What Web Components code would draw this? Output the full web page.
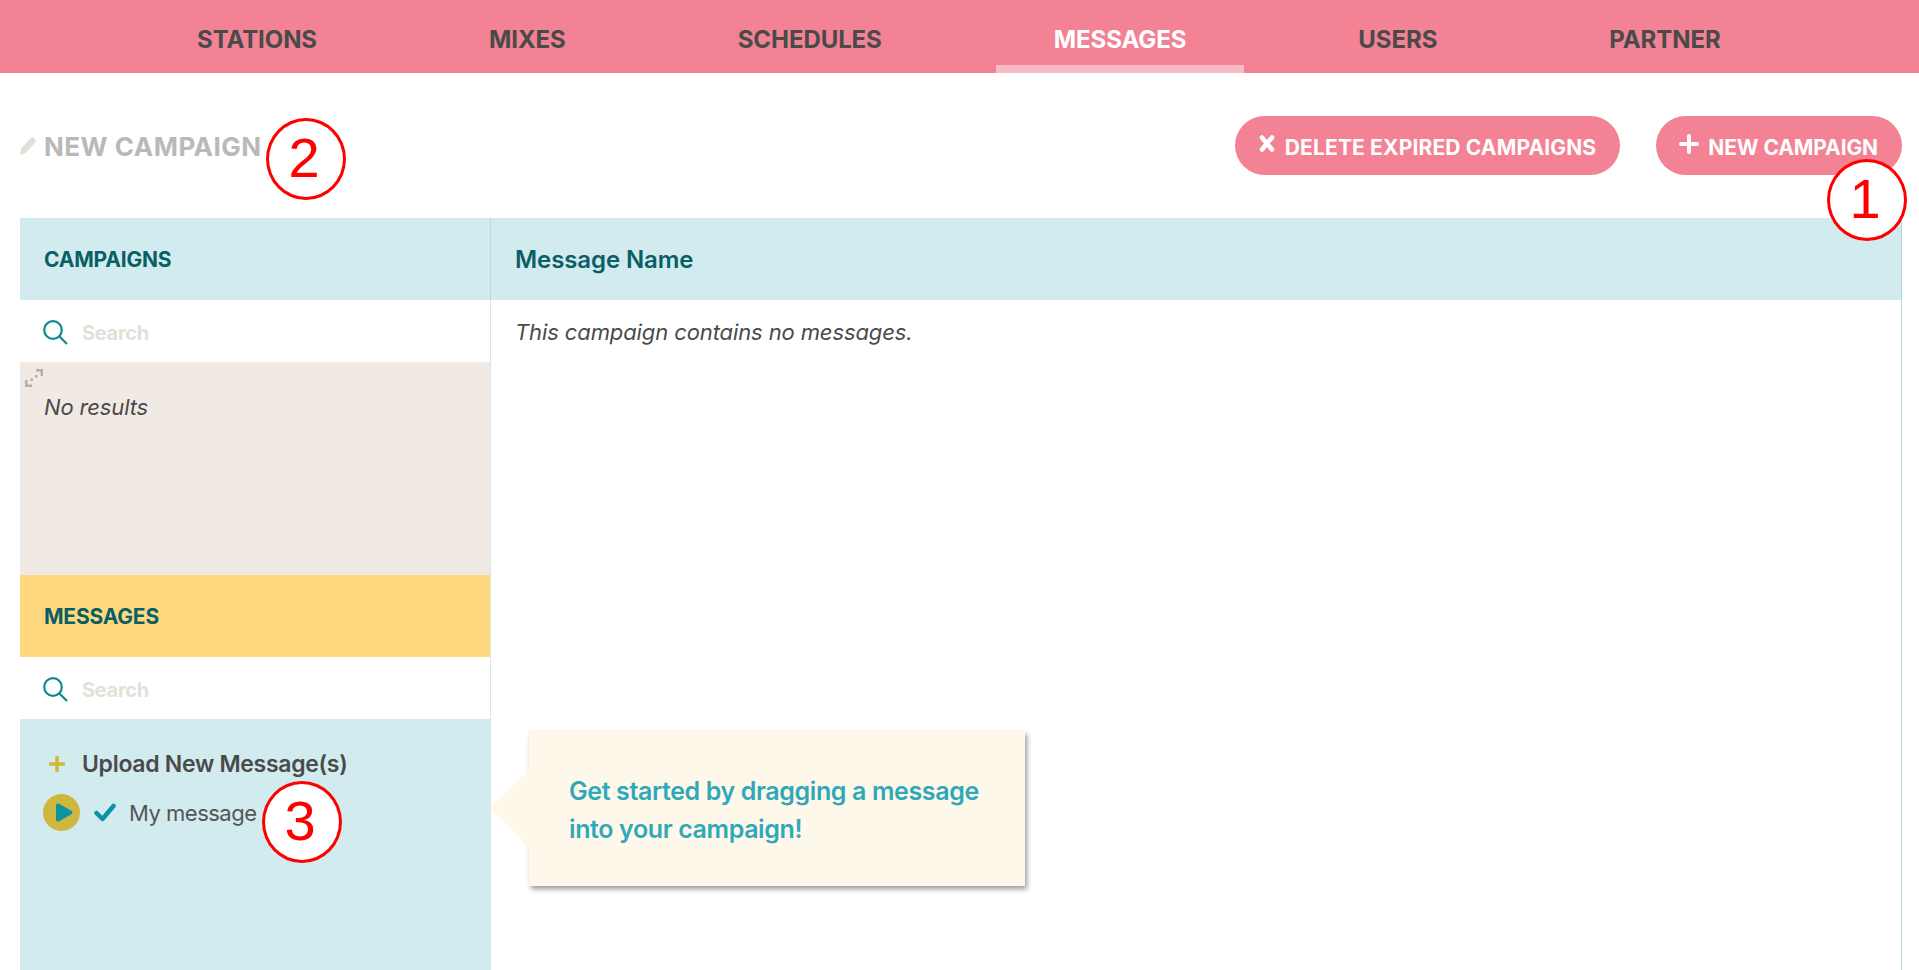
<!DOCTYPE html>
<html lang="en">
<head>
<meta charset="utf-8">
<title>Messages</title>
<style>
    html, body { margin: 0; height: 100%; overflow: hidden; background: #fff; }
    body { font-family: Inter, "Noto Sans", sans-serif; color: #4a4a4a; position: relative; }
</style>
</head>
<body>
<top-nav>
    <nav-tab>STATIONS</nav-tab>
    <nav-tab>MIXES</nav-tab>
    <nav-tab>SCHEDULES</nav-tab>
    <nav-tab active>MESSAGES</nav-tab>
    <nav-tab>USERS</nav-tab>
    <nav-tab>PARTNER</nav-tab>
</top-nav>
<page-header>
    <pill-button icon="x" slot="actions" style="--ls:0.15px">DELETE EXPIRED CAMPAIGNS</pill-button>
    <pill-button icon="plus" slot="actions" style="--ls:-0.1px">NEW CAMPAIGN</pill-button>
</page-header>
<campaign-board></campaign-board>
<hint-tip>Get started by dragging a message<br>into your campaign!</hint-tip>
<step-mark n="2" style="left:266px;top:118px"></step-mark>
<step-mark n="1" style="left:1827px;top:159px"></step-mark>
<step-mark n="3" style="left:262px;top:781px"></step-mark>

<script>
class TopNav extends HTMLElement {
    constructor() {
        super();
        this.attachShadow({ mode: "open" });
        this.shadowRoot.innerHTML = `<style>
            :host { display: flex; height: 73px; background: #f38295; padding-left: 139px; gap: 56px; box-sizing: border-box; }
        </style><slot></slot>`;
    }
}

class NavTab extends HTMLElement {
    constructor() {
        super();
        this.attachShadow({ mode: "open" });
        this.shadowRoot.innerHTML = `<style>
            :host { display: block; box-sizing: border-box; height: 73px; padding: 0 58px; line-height: 79px; font-size: 24px; font-weight: 700; letter-spacing: -0.08px; color: #4a4a4a; }
            :host([active]) { color: #fff; border-bottom: 8px solid #f9bac6; }
        </style><slot></slot>`;
    }
}

class PageHeader extends HTMLElement {
    constructor() {
        super();
        this.attachShadow({ mode: "open" });
        this.shadowRoot.innerHTML = `<style>
            :host { display: flex; align-items: center; justify-content: space-between; height: 59px; margin: 43px 17px 43px 20px; }
            h1 { display: flex; align-items: center; gap: 8px; margin: 0; font-size: 26px; font-weight: 700; letter-spacing: 0.5px; color: #b9b9b9; }
            h1 span { position: relative; top: 1px; }
            svg { width: 16px; height: 18px; }
            .actions { display: flex; gap: 36px; }
        </style>
        <h1><svg viewBox="0 0 16 18"><path d="M0 18l1.200-6.500L10.800 1a2 2 0 0 1 2.900 0l1.500 1.600a2 2 0 0 1 0 2.800L5.500 16.200z" fill="#e4dfd8"/></svg><span>NEW CAMPAIGN</span></h1>
        <div class="actions"><slot name="actions"></slot></div>`;
    }
}

class PillButton extends HTMLElement {
    constructor() {
        super();
        this.attachShadow({ mode: "open" });
        const icons = {
            x: `<path d="M4 3.500l10 12M14 3.500L4 15.500" stroke="#fff" stroke-width="4.500" stroke-linecap="round" fill="none"/>`,
            plus: `<path d="M10 2v16M2 10h16" stroke="#fff" stroke-width="4" stroke-linecap="round" fill="none"/>`
        };
        const name = this.getAttribute("icon");
        this.shadowRoot.innerHTML = `<style>
            :host { display: flex; align-items: center; gap: 9px; height: 59px; padding: 0 24px 0 23px; border-radius: 30px; background: #f38295; color: #fff; font-size: 21px; font-weight: 700; letter-spacing: var(--ls, 0); box-sizing: border-box; }
            svg { width: ${name === "x" ? 18 : 20}px; height: 20px; margin-top: -3px; flex: none; }
            span { position: relative; top: 2px; }
        </style>
        <svg viewBox="0 0 ${name === "x" ? 18 : 20} 20">${icons[name]}</svg><span><slot></slot></span>`;
    }
}

class SearchRow extends HTMLElement {
    constructor() {
        super();
        this.attachShadow({ mode: "open" });
        this.shadowRoot.innerHTML = `<style>
            :host { display: flex; align-items: center; height: 62px; padding-left: 23px; gap: 14px; background: #fff; font-size: 20px; font-weight: 700; letter-spacing: -0.3px; color: #e4dfd8; box-sizing: border-box; }
            svg { width: 25px; height: 25px; margin-top: 2px; }
            span { position: relative; top: 2px; }
        </style>
        <svg viewBox="0 0 25 25" fill="none" stroke="#0d8a8f"><circle cx="10" cy="10" r="8.800" stroke-width="2.200"/><path d="M16.500 16.500L24 24" stroke-width="2.200"/></svg><span>Search</span>`;
    }
}

class PanelHead extends HTMLElement {
    constructor() {
        super();
        this.attachShadow({ mode: "open" });
        this.shadowRoot.innerHTML = `<style>
            :host { display: flex; align-items: center; height: 82px; padding: 1px 0 0 24px; font-size: 21px; font-weight: 700; letter-spacing: -0.2px; color: #0a5f67; background: var(--head, #d2ebee); box-sizing: border-box; }
        </style><slot></slot>`;
    }
}

class CampaignBoard extends HTMLElement {
    constructor() {
        super();
        this.attachShadow({ mode: "open" });
        this.shadowRoot.innerHTML = `<style>
            :host { display: grid; grid-template-columns: 471px 1fr; margin: 0 17px 0 20px; height: 752px; overflow: hidden; border-right: 1px solid #b9d8db; font-size: 22px; color: #4a4a4a; }
            .left { display: flex; flex-direction: column; border-right: 1px solid #e2e2e2; }
            .left panel-head:first-child { border-right: 1px solid #b9d8db; margin-right: -1px; }
            .campaigns { height: 213px; background: #f1e9e3; position: relative; padding: 32px 0 0 24px; box-sizing: border-box; font-style: italic; letter-spacing: -0.15px; }
            .expand { position: absolute; left: 5px; top: 7px; width: 18px; height: 18px; }
            .library { flex: 1; background: #d2ebee; padding: 29px 0 0 23px; }
            .upload { display: flex; align-items: center; height: 32px; font-size: 23px; font-weight: 600; letter-spacing: -0.3px; color: #4a4a4a; }
            .upload svg { width: 16px; height: 16px; margin: 0 17px 0 6px; }
            .item { display: flex; align-items: center; height: 37px; margin-top: 14px; color: #555; letter-spacing: -0.5px; }
            .play { width: 37px; height: 37px; margin-right: 14px; }
            .check { width: 22px; height: 19px; margin-right: 13px; }
            .right panel-head { font-size: 24px; font-weight: 600; letter-spacing: -0.1px; padding-left: 24px; }
            .empty { padding: 14px 24px; font-style: italic; letter-spacing: -0.11px; line-height: 36px; }
        </style>
        <div class="left">
            <panel-head>CAMPAIGNS</panel-head>
            <search-row></search-row>
            <div class="campaigns">
                <svg class="expand" viewBox="0 0 18 18" fill="#b5b0aa"><path d="M11 0h7v7h-2.500V2.500H11zM0 11h2.500v4.500H7V18H0z"/><rect x="10" y="6" width="2.500" height="2.500"/><rect x="5.500" y="9.500" width="2.500" height="2.500"/></svg>
                No results
            </div>
            <panel-head style="--head:#fed97e">MESSAGES</panel-head>
            <search-row></search-row>
            <div class="library">
                <div class="upload"><svg viewBox="0 0 16 16"><path d="M8 1v14M1 8h14" stroke="#d1b73c" stroke-width="3.500" stroke-linecap="round"/></svg>Upload New Message(s)</div>
                <div class="item">
                    <svg class="play" viewBox="0 0 37 37"><circle cx="18.500" cy="18.500" r="18.500" fill="#cfb63f"/><path d="M13 11.500v14a2 2 0 0 0 3 1.700l12.500-7a2 2 0 0 0 0-3.400L16 9.800a2 2 0 0 0-3 1.700z" fill="#0a93a3"/></svg>
                    <svg class="check" viewBox="0 0 22 19" fill="none"><path d="M2.500 10l6 6L19.500 3" stroke="#0a93a3" stroke-width="4.500" stroke-linecap="round" stroke-linejoin="round"/></svg>
                    My message
                </div>
            </div>
        </div>
        <div class="right">
            <panel-head>Message Name</panel-head>
            <div class="empty">This campaign contains no messages.</div>
        </div>`;
    }
}

class HintTip extends HTMLElement {
    constructor() {
        super();
        this.attachShadow({ mode: "open" });
        this.shadowRoot.innerHTML = `<style>
            :host { position: absolute; left: 529px; top: 731px; width: 496px; height: 155px; box-sizing: border-box; padding: 41px 0 0 40px; background: #fef8ea; box-shadow: 2px 3px 5px rgba(0,0,0,.4); color: #2fa9ba; font-size: 25px; font-weight: 600; line-height: 38px; letter-spacing: -0.38px; }
            .arrow { position: absolute; left: -39px; top: 39px; width: 39px; height: 78px; }
        </style>
        <svg class="arrow" viewBox="0 0 39 78"><path d="M39 0L0 38l39 40z" fill="#fef8ea"/></svg><slot></slot>`;
    }
}

// numbered red circles laid over the screenshot
class StepMark extends HTMLElement {
    constructor() {
        super();
        this.attachShadow({ mode: "open" });
        this.shadowRoot.innerHTML = `<style>
            :host { position: absolute; width: 80px; height: 82px; box-sizing: border-box; border: 3px solid #f00; border-radius: 50%; background: #fff; display: flex; align-items: center; justify-content: center; font-family: "Liberation Sans", Arial, sans-serif; font-size: 56px; color: #f00; line-height: 1; }
            span { transform: translate(-2px, -1px); }
        </style><span>${this.getAttribute("n")}</span>`;
    }
}

customElements.define("top-nav", TopNav);
customElements.define("nav-tab", NavTab);
customElements.define("page-header", PageHeader);
customElements.define("pill-button", PillButton);
customElements.define("search-row", SearchRow);
customElements.define("panel-head", PanelHead);
customElements.define("campaign-board", CampaignBoard);
customElements.define("hint-tip", HintTip);
customElements.define("step-mark", StepMark);
</script>
</body>
</html>
